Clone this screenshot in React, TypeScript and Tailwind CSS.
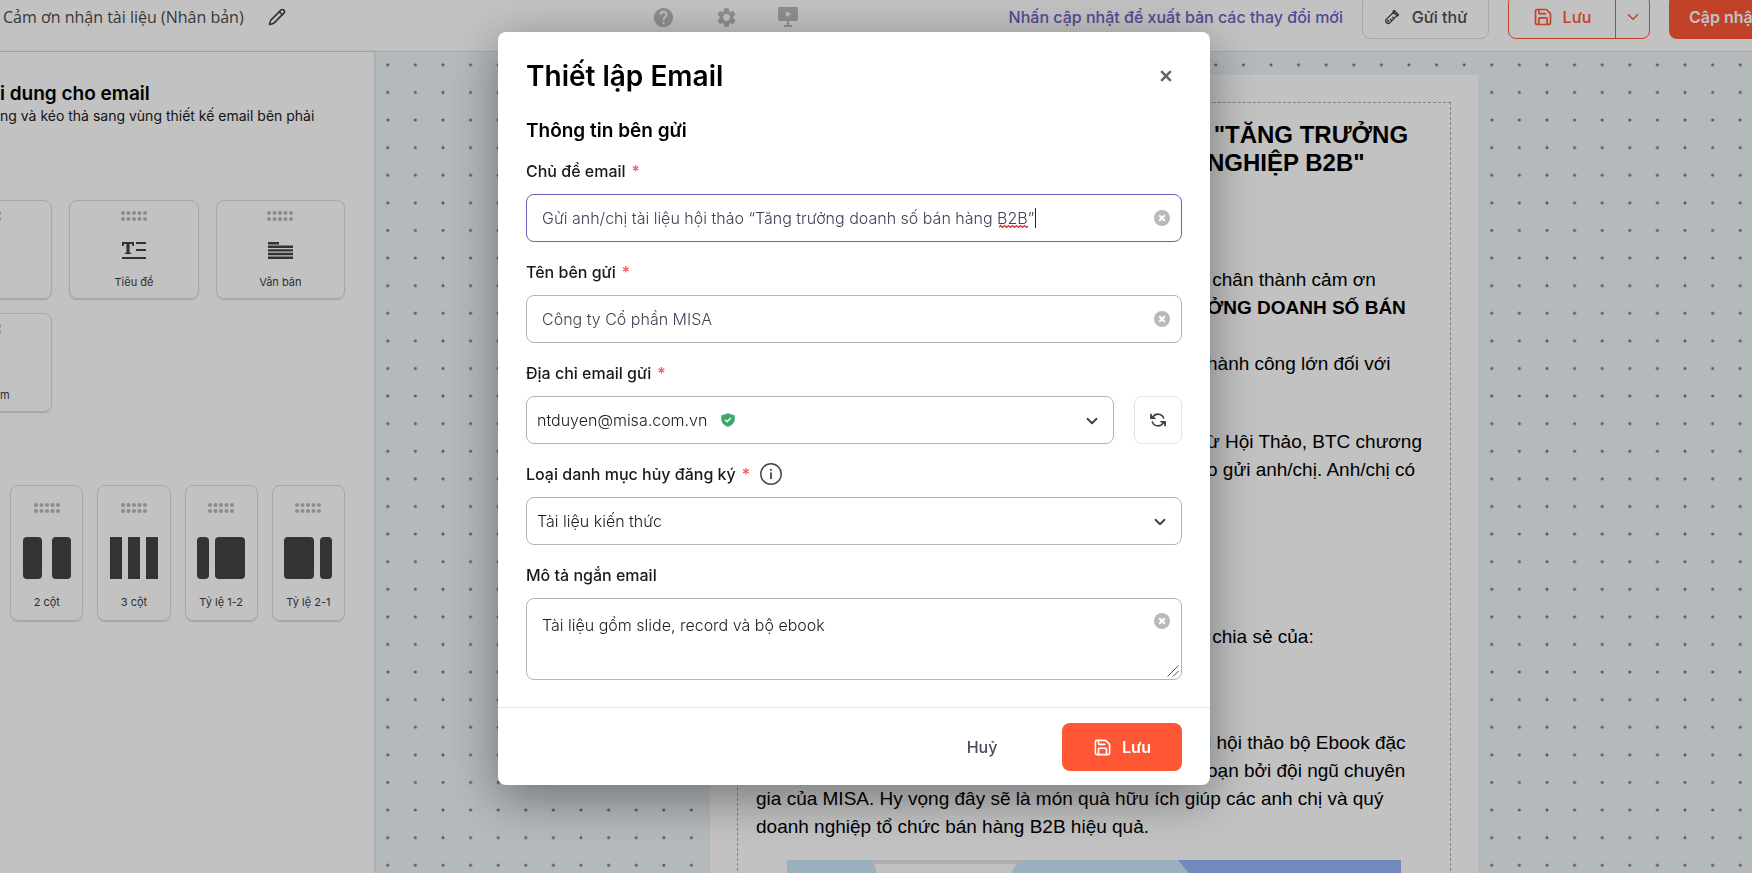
import { ChevronDown, Pencil, Save } from "lucide-react";
import { useState, type ReactNode } from "react";
import { MdHelp, MdSettings } from "react-icons/md";

type BlockCardProps = {
  label: string;
  icon?: ReactNode;
};

const emailOptions = ["ntduyen@misa.com.vn"];
const categoryOptions = ["Tài liệu kiến thức"];

const layoutBlocks = [
  { label: "1 cột", bars: [{ x: 0, width: 48, radius: 4 }] },
  {
    label: "2 cột",
    bars: [
      { x: 0, width: 19, radius: 4 },
      { x: 29, width: 19, radius: 4 },
    ],
  },
  {
    label: "3 cột",
    bars: [
      { x: 0, width: 12, radius: 0 },
      { x: 18, width: 12, radius: 0 },
      { x: 36, width: 12, radius: 0 },
    ],
  },
  {
    label: "Tỷ lệ 1-2",
    bars: [
      { x: 0, width: 12, radius: 4 },
      { x: 18, width: 30, radius: 4 },
    ],
  },
  {
    label: "Tỷ lệ 2-1",
    bars: [
      { x: 0, width: 30, radius: 4 },
      { x: 36, width: 12, radius: 4 },
    ],
  },
];

function GripDots() {
  return (
    <svg width="26" height="10" viewBox="0 0 26 10" fill="#b8b8b8">
      {[2, 7.5, 13, 18.5, 24].map((cx) => (
        <g key={cx}>
          <circle cx={cx} cy="2" r="2" />
          <circle cx={cx} cy="8" r="2" />
        </g>
      ))}
    </svg>
  );
}

function HeadingIcon() {
  return (
    <svg width="24" height="17" viewBox="0 0 24 17" fill="#444">
      <path d="M0 0h12v4h-1.500l-.6-2H7.600v8.600l1.700.4v1H2.700v-1l1.700-.4V2H2.100l-.6 2H0z" />
      <path d="M14 0h10v2H14zM14 7h10v2H14zM0 15h24v2H0z" />
    </svg>
  );
}

function ParagraphIcon() {
  return (
    <svg width="25" height="17" viewBox="0 0 25 17" fill="#444">
      <path d="M0 0h11v2.400H0zM0 3.600h25V6H0zM0 7.200h25v2.400H0zM0 10.800h25v2.400H0zM0 14.400h25V17H0z" />
    </svg>
  );
}

function PresentIcon() {
  return (
    <svg width="20" height="20" viewBox="0 0 20 20">
      <path
        fill="#bbb"
        d="M2 0h16a2 2 0 0 1 2 2v10a2 2 0 0 1-2 2h-7v4h3v2H6v-2h3v-4H2a2 2 0 0 1-2-2V2a2 2 0 0 1 2-2z"
      />
      <path fill="#fff" d="M8 4.500v5.400l5-2.700z" />
    </svg>
  );
}

function TestTubeIcon() {
  return (
    <svg
      width="16"
      height="16"
      viewBox="0 0 16 16"
      fill="none"
      stroke="#3c4043"
      strokeWidth="1.300"
      strokeLinecap="round"
      strokeLinejoin="round"
    >
      <path d="M10.200 1.500l4.300 4.300-1.200 1.200L9 2.700zM9.600 3.300l-7.300 7.100a2.500 2.500 0 0 0 3.500 3.500l7-7.300" />
      <path d="M9.700 9.300 8.500 8.100M7.700 11.400 6.500 10.200" />
      <circle cx="4.300" cy="12" r=".5" />
    </svg>
  );
}

function ShieldIcon() {
  return (
    <svg width="14" height="14" viewBox="0 0 14 14">
      <path
        fill="#3aaa6b"
        d="M7 0c1.800 1.200 3.800 1.800 6.200 1.900.3 0 .5.3.5.6v4.100c0 3.300-2.600 5.800-6.700 7.400C2.900 12.400.3 9.900.3 6.600V2.500c0-.3.2-.6.5-.6C3.200 1.800 5.200 1.200 7 0z"
      />
      <path
        d="M4.200 6.900l2 1.900 3.600-3.700"
        fill="none"
        stroke="#fff"
        strokeWidth="1.500"
      />
    </svg>
  );
}

function RefreshIcon() {
  return (
    <svg
      width="16"
      height="14"
      viewBox="0 0 16 14"
      fill="none"
      stroke="#3c4043"
      strokeWidth="1.600"
    >
      <path d="M13.800 5.600A6 6 0 0 0 2.800 4.200M2.200 8.400a6 6 0 0 0 11 1.400" />
      <path d="M1 .8v4.400h4.600M15 13.200V8.800h-4.600" />
      <path d="M1 2.500v2.700h3zM15 11.500V8.800h-3z" fill="#3c4043" strokeWidth="1" />
    </svg>
  );
}

function InfoIcon() {
  return (
    <svg width="22" height="22" viewBox="0 0 22 22" fill="none" stroke="#444">
      <circle cx="11" cy="11" r="10.200" strokeWidth="1.500" />
      <path d="M11 9.500V16" strokeWidth="1.800" />
      <path d="M11 6v1.800" strokeWidth="1.800" />
    </svg>
  );
}

function ClearButton({ onClick }: { onClick: () => void }) {
  return (
    <button type="button" aria-label="Xoá" onClick={onClick}>
      <svg width="16" height="16" viewBox="0 0 16 16">
        <circle cx="8" cy="8" r="8" fill="#b9b9b9" />
        <path
          d="M5.200 5.200l5.600 5.600M10.800 5.200l-5.600 5.600"
          stroke="#fff"
          strokeWidth="2"
        />
      </svg>
    </button>
  );
}

// Red spell-check wave and the text caret
function SpellMark() {
  return (
    <svg width="38" height="24" viewBox="0 0 38 24" fill="none">
      <path
        d="M0 20.500l1.500-2 2 2 2-2 2 2 2-2 2 2 2-2 2 2 2-2 2 2 2-2 2 2 2-2 2 2 1.500-1.500"
        stroke="#e02020"
        strokeWidth="1.200"
      />
      <path d="M36.500 1v20" stroke="#222" />
    </svg>
  );
}

function BlockCard({ label, icon }: BlockCardProps) {
  return (
    <div className="flex h-[99px] flex-col items-center rounded-lg border border-[#dcdcdc] pt-2.5 text-[11px] leading-4 text-[#3c4043] shadow-[0_1px_1px_rgba(0,0,0,0.15)]">
      <GripDots />
      <span className="mt-5 flex h-[18px] items-center">{icon}</span>
      <span className="mt-[15px]">{label}</span>
    </div>
  );
}

function FieldLabel({
  htmlFor,
  children,
  required = true,
  info = false,
}: {
  htmlFor: string;
  children: ReactNode;
  required?: boolean;
  info?: boolean;
}) {
  return (
    <div className="mb-[11px] flex h-6 items-center">
      <label
        htmlFor={htmlFor}
        className="text-base font-medium text-[#1a1a1a]"
      >
        {children}
        {required && <span className="ml-1.5 text-[#f0555a]">*</span>}
      </label>
      {info && (
        <span className="ml-2.5">
          <InfoIcon />
        </span>
      )}
    </div>
  );
}

function SelectBox({
  id,
  options,
  badge,
}: {
  id: string;
  options: string[];
  badge?: ReactNode;
}) {
  return (
    <div className="relative flex-1">
      <select
        id={id}
        className="block h-12 w-full appearance-none rounded-lg border border-[#b5b5b5] bg-white pl-2.5 pr-12 text-base font-light text-[#1a1a1a] outline-none"
      >
        {options.map((option) => (
          <option key={option}>{option}</option>
        ))}
      </select>
      {badge && (
        <span className="pointer-events-none absolute inset-y-0 left-[195px] flex items-center">
          {badge}
        </span>
      )}
      <ChevronDown
        size={18}
        strokeWidth={2.5}
        className="pointer-events-none absolute right-[13px] top-4 text-[#3c4043]"
      />
    </div>
  );
}

function TopBar() {
  return (
    <header className="-mt-[17px] flex h-[69px] shrink-0 items-center border-b border-[#dcdcdc] bg-white">
      <div className="flex w-[652px] items-center gap-6 pl-[3px]">
        <h1 className="font-['Open_Sans',sans-serif] text-base text-[#4a4a4a]">
          Cảm ơn nhận tài liệu (Nhân bản)
        </h1>
        <button type="button" aria-label="Đổi tên">
          <Pencil size={18} className="text-[#3c4043]" />
        </button>
      </div>

      <nav className="flex items-center gap-10">
        <button type="button" aria-label="Trợ giúp">
          <MdHelp size={23} className="text-[#bbb]" />
        </button>
        <button type="button" aria-label="Cài đặt">
          <MdSettings size={23} className="text-[#bbb]" />
        </button>
        <button type="button" aria-label="Trình chiếu">
          <PresentIcon />
        </button>
      </nav>

      <div className="-mr-[33px] ml-auto flex shrink-0 items-center gap-[19px] text-base font-medium">
        <p className="text-[#6f5fc4]">
          Nhấn cập nhật để xuất bản các thay đổi mới
        </p>
        <button
          type="button"
          className="flex h-11 w-[127px] items-center justify-center gap-3 rounded-lg border border-[#dcdcdc] text-[#4a4d52]"
        >
          <TestTubeIcon />
          Gửi thử
        </button>
        <div className="flex h-11 w-[142px] rounded-lg border border-[#ff5636] text-[#ff5636]">
          <button
            type="button"
            className="flex flex-1 items-center justify-center gap-2.5"
          >
            <Save size={20} />
            Lưu
          </button>
          <button
            type="button"
            aria-label="Thêm lựa chọn lưu"
            className="flex w-[34px] items-center justify-center border-l border-[#ff5636]"
          >
            <ChevronDown size={18} />
          </button>
        </div>
        <button
          type="button"
          className="h-11 w-[116px] rounded-lg bg-[#ff5636] pl-5 text-left font-semibold text-white"
        >
          Cập nhật
        </button>
      </div>
    </header>
  );
}

function Sidebar() {
  return (
    <aside className="z-10 w-[374px] shrink-0 overflow-hidden bg-white shadow-[1px_0_3px_rgba(0,0,0,0.1)]">
      <div className="pt-7">
        <h2 className="text-[19px] font-semibold leading-7 text-black">
          i dung cho email
        </h2>
        <p className="text-sm leading-4 text-[#1a1a1a]">
          ng và kéo thả sang vùng thiết kế email bên phải
        </p>
      </div>

      <div className="-ml-[77px] mr-[29px] mt-[76px] grid grid-cols-3 gap-x-[17px] gap-y-3.5">
        <BlockCard label="Ảnh" />
        <BlockCard label="Tiêu đề" icon={<HeadingIcon />} />
        <BlockCard label="Văn bản" icon={<ParagraphIcon />} />
        <BlockCard label="Nút bấm" />
      </div>

      <div className="-ml-[77px] mr-[29px] mt-[73px] grid grid-cols-5 gap-3.5">
        {layoutBlocks.map((block) => (
          <div
            key={block.label}
            className="flex h-[136px] flex-col items-center rounded-lg border border-[#dcdcdc] pt-[17px] text-[11px] leading-4 text-[#3c4043] shadow-[0_1px_1px_rgba(0,0,0,0.15)]"
          >
            <GripDots />
            <svg
              width="48"
              height="42"
              viewBox="0 0 48 42"
              fill="#444"
              className="mb-[15px] mt-6"
            >
              {block.bars.map((bar) => (
                <rect
                  key={bar.x}
                  x={bar.x}
                  width={bar.width}
                  height="42"
                  rx={bar.radius}
                />
              ))}
            </svg>
            {block.label}
          </div>
        ))}
      </div>
    </aside>
  );
}

function EmailCanvas() {
  return (
    <main className="relative flex-1 overflow-hidden bg-[#edf3f7] pl-[336px] pt-[23px]">
      <svg className="absolute inset-0 h-full w-full" aria-hidden="true">
        <defs>
          <pattern
            id="dots"
            width="27.600"
            height="27.600"
            patternUnits="userSpaceOnUse"
          >
            <circle cx="13.800" cy="12.800" r="1.500" fill="#6c7378" />
          </pattern>
        </defs>
        <rect width="100%" height="100%" fill="url(#dots)" />
      </svg>

      <article className="relative w-[768px] bg-white p-[27px] font-['Liberation_Sans',Arial,sans-serif] text-[19px] leading-7 text-black">
        <div className="border border-dashed border-[#aaa] px-[18px] pt-[18px]">
          <div className="whitespace-pre pl-[451px]">
            <h2 className="mb-[89px] text-2xl font-bold leading-7">
              {' "TĂNG TRƯỞNG'}
              <br />
              {'NGHIỆP B2B"'}
            </h2>
            <p>{" chân thành cảm ơn"}</p>
            <p className="mb-7 font-bold">ỞNG DOANH SỐ BÁN</p>
            <p className="mb-[50px]">hành công lớn đối với</p>
            <p className="mb-[139px]">
              ừ Hội Thảo, BTC chương
              <br />o gửi anh/chị. Anh/chị có
            </p>
            <p className="mb-[78px]">{" chia sẻ của:"}</p>
            <p>
              i hội thảo bộ Ebook đặc
              <br />
              oạn bởi đội ngũ chuyên
            </p>
          </div>
          <p>
            gia của MISA. Hy vọng đây sẽ là món quà hữu ích giúp các anh chị và
            quý
            <br />
            doanh nghiệp tổ chức bán hàng B2B hiệu quả.
          </p>
          <svg
            viewBox="0 0 614 120"
            width="614"
            height="120"
            className="mx-auto mt-[19px]"
          >
            <rect width="614" height="120" fill="#cbe8f8" />
            <path d="M391 0h223v120H490z" fill="#98b3fa" />
            <path
              d="M84 0c4 2 6 12 8 30v90h130V30c2-18 6-28 13-30z"
              fill="#fdfdfd"
            />
            <path d="M85 0h149l-3 4H88z" fill="#e4e4e4" />
          </svg>
        </div>
      </article>
    </main>
  );
}

function EmailSettingsDialog() {
  const [subject, setSubject] = useState(
    "Gửi anh/chị tài liệu hội thảo “Tăng trưởng doanh số bán hàng B2B”",
  );
  const [sender, setSender] = useState("Công ty Cổ phần MISA");
  const [summary, setSummary] = useState(
    "Tài liệu gồm slide, record và bộ ebook",
  );

  return (
    <div className="fixed inset-0 z-50 flex items-start justify-center bg-black/24 pr-11 pt-8">
      <div
        role="dialog"
        aria-labelledby="dialog-title"
        className="w-full max-w-[712px] rounded-lg bg-white shadow-[0_12px_50px_rgba(0,0,0,0.4)]"
      >
        <div className="px-7 pb-[27px] pt-6">
          <div className="flex items-center justify-between">
            <h2
              id="dialog-title"
              className="text-[28px] font-semibold leading-10 text-black"
            >
              Thiết lập Email
            </h2>
            <button type="button" aria-label="Đóng" className="p-2.5">
              <svg width="12" height="12" viewBox="0 0 12 12">
                <path
                  d="M1.200 1.200l9.600 9.600M10.800 1.200l-9.600 9.600"
                  stroke="#666"
                  strokeWidth="2.500"
                />
              </svg>
            </button>
          </div>

          <h3 className="mb-3.5 mt-[21px] text-[19px] font-semibold leading-7 text-black">
            Thông tin bên gửi
          </h3>

          <div className="space-y-[18px]">
            <div>
              <FieldLabel htmlFor="subject">Chủ đề email</FieldLabel>
              <div className="relative flex h-12 items-center rounded-lg border border-[#6f5fb8] pr-[11px]">
                <input
                  id="subject"
                  type="text"
                  value={subject}
                  onChange={(event) => setSubject(event.target.value)}
                  className="h-full min-w-0 flex-1 bg-transparent pl-[15px] text-base font-light text-[#3f4254] outline-none"
                />
                <span className="pointer-events-none absolute left-[472px] top-3">
                  <SpellMark />
                </span>
                <ClearButton onClick={() => setSubject("")} />
              </div>
            </div>

            <div>
              <FieldLabel htmlFor="sender">Tên bên gửi</FieldLabel>
              <div className="flex h-12 items-center rounded-lg border border-[#b5b5b5] pr-[11px]">
                <input
                  id="sender"
                  type="text"
                  value={sender}
                  onChange={(event) => setSender(event.target.value)}
                  className="h-full min-w-0 flex-1 bg-transparent pl-[15px] text-base font-light text-[#3f4254] outline-none"
                />
                <ClearButton onClick={() => setSender("")} />
              </div>
            </div>

            <div>
              <FieldLabel htmlFor="from">Địa chỉ email gửi</FieldLabel>
              <div className="flex gap-5">
                <SelectBox
                  id="from"
                  options={emailOptions}
                  badge={<ShieldIcon />}
                />
                <button
                  type="button"
                  aria-label="Tải lại"
                  className="flex size-12 items-center justify-center rounded-lg border border-[#e3e3e3]"
                >
                  <RefreshIcon />
                </button>
              </div>
            </div>

            <div>
              <FieldLabel htmlFor="category" info>
                Loại danh mục hủy đăng ký
              </FieldLabel>
              <SelectBox id="category" options={categoryOptions} />
            </div>

            <div>
              <FieldLabel htmlFor="summary" required={false}>
                Mô tả ngắn email
              </FieldLabel>
              <div className="relative">
                <textarea
                  id="summary"
                  value={summary}
                  onChange={(event) => setSummary(event.target.value)}
                  className="block h-[82px] w-full resize-none rounded-lg border border-[#b5b5b5] py-3.5 pl-[15px] pr-10 text-base font-light text-[#1a1a1a] outline-none"
                />
                <span className="absolute right-3 top-[15px] flex">
                  <ClearButton onClick={() => setSummary("")} />
                </span>
                <svg
                  width="12"
                  height="12"
                  viewBox="0 0 12 12"
                  stroke="#555"
                  className="pointer-events-none absolute bottom-[3px] right-[3px]"
                >
                  <path d="M.5 11.500l11-11M6 11.500L11.500 6" />
                </svg>
              </div>
            </div>
          </div>
        </div>

        <div className="flex items-center justify-end gap-10 border-t border-[#e3e6ea] px-7 pb-3.5 pt-[15px] text-base">
          <button
            type="button"
            className="h-12 w-20 font-medium text-[#4a4a5e]"
          >
            Huỷ
          </button>
          <button
            type="button"
            className="flex h-12 w-[120px] items-center justify-center gap-2.5 rounded-lg bg-[#ff5636] font-semibold text-white"
          >
            <Save size={19} />
            Lưu
          </button>
        </div>
      </div>
    </div>
  );
}

export default function App() {
  return (
    <div className="flex h-screen flex-col overflow-hidden bg-white font-['Inter',sans-serif]">
      <TopBar />
      <div className="flex min-h-0 flex-1">
        <Sidebar />
        <EmailCanvas />
      </div>
      <EmailSettingsDialog />
    </div>
  );
}
